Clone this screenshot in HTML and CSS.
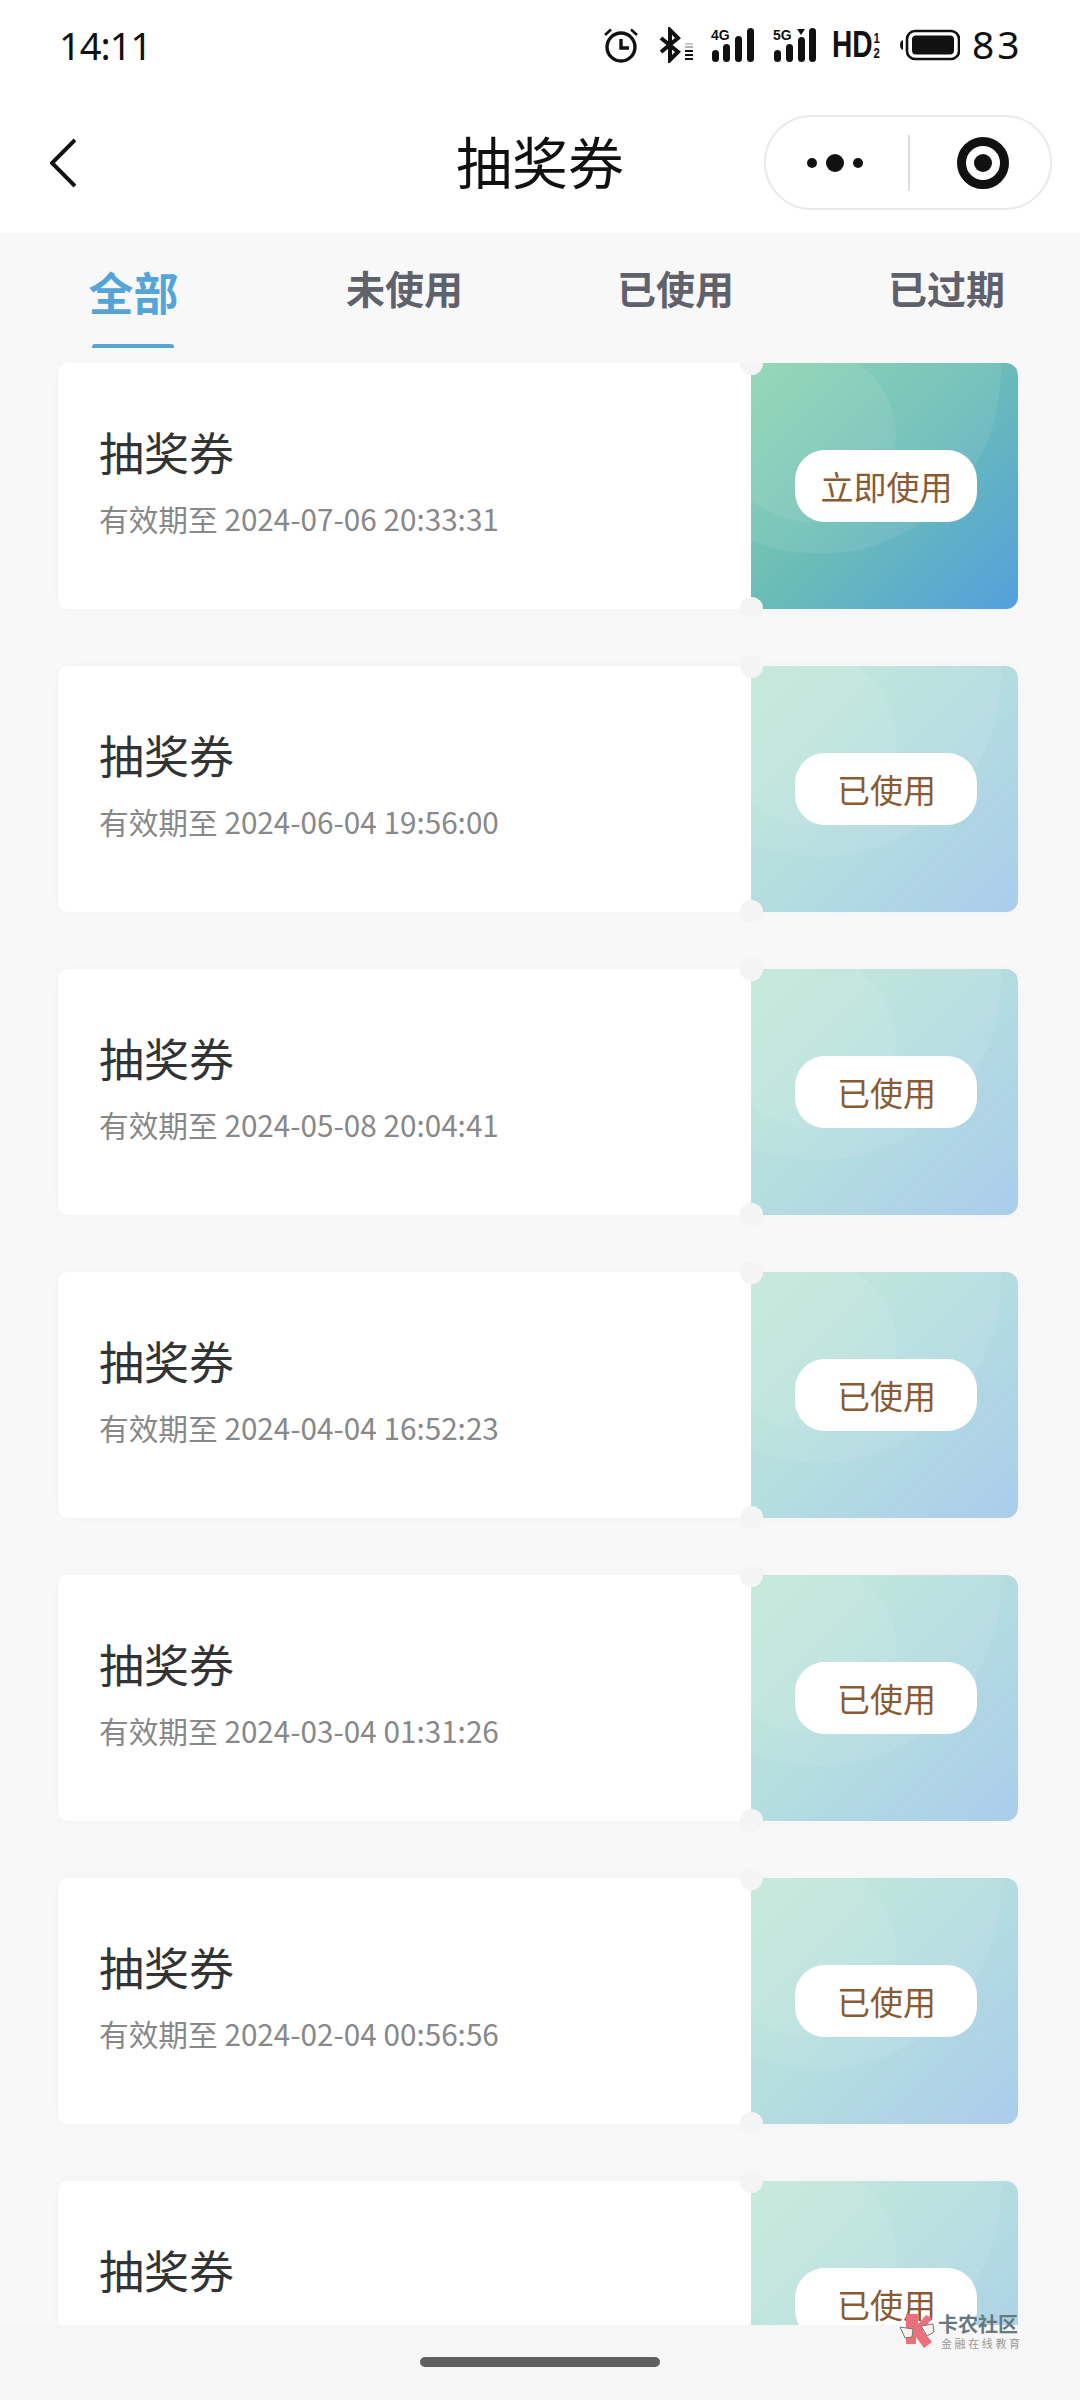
FILE: index.html
```html
<!DOCTYPE html>
<html lang="zh-CN">
<head>
<meta charset="utf-8">
<title>抽奖券</title>
<link rel="stylesheet" href="styles.css">
</head>
<body>
<div class="app">
  <header class="top">
    <div class="status">
      <span class="time">14:11</span>
      <div class="status-icons">
        <svg class="ic-alarm" width="36" height="36" viewBox="0 0 36 36"><circle cx="18" cy="20" r="14" fill="none" stroke="#111" stroke-width="3.4"/><path d="M18 12v9h8" fill="none" stroke="#111" stroke-width="3.4"/><path d="M2 8 8 2.500M34 8 28 2.500" stroke="#111" stroke-width="2.500"/></svg>
        <svg class="ic-bt" width="36" height="36" viewBox="0 0 36 36"><path d="M3 11 20 25 12 33V3l8 8L3 25" fill="none" stroke="#111" stroke-width="4"/><path d="M27 17h8" stroke="#bbb" stroke-width="1.500"/><path d="M27 20h8" stroke="#999" stroke-width="1.500"/><path d="M27 24h8M27 28h8M27 32h8" stroke="#111" stroke-width="2"/></svg>
        <svg class="ic-sig ic-4g" width="44" height="36" viewBox="0 0 44 36"><text x="0" y="13" class="mini">4G</text><rect x="1" y="23" width="7" height="12" rx="3.500"/><rect x="12" y="17" width="7" height="18" rx="3.500"/><rect x="24" y="9" width="7" height="26" rx="3.500"/><rect x="36" y="1" width="7" height="34" rx="3.500"/></svg>
        <svg class="ic-sig" width="44" height="36" viewBox="0 0 44 36"><text x="0" y="13" class="mini">5G</text><path d="M24 2h8l-4 6z"/><rect x="1" y="23" width="7" height="12" rx="3.500"/><rect x="13" y="17" width="7" height="18" rx="3.500"/><rect x="25" y="10" width="7" height="25" rx="3.500"/><rect x="36" y="1" width="7" height="34" rx="3.500"/></svg>
        <span class="hd">HD<span class="hd-frac"><i>1</i><i>2</i></span></span>
        <svg class="ic-bat" width="60" height="32" viewBox="0 0 60 32"><path d="M0 16q0-4 3-5v10q-3-1-3-5z" fill="#111"/><rect x="7" y="2" width="52" height="28" rx="8" fill="none" stroke="#111" stroke-width="2.600"/><rect x="12" y="6.500" width="42" height="19" rx="4" fill="#111"/></svg>
        <span class="level">83</span>
      </div>
    </div>
    <nav class="navbar">
      <svg class="back" width="26" height="50" viewBox="0 0 26 50"><path d="M25 2 2 25l23 23" fill="none" stroke="#111" stroke-width="4"/></svg>
      <h1 class="title">抽奖券</h1>
      <div class="capsule">
        <div class="more"><i class="dot"></i><i class="dot dot-big"></i><i class="dot"></i></div>
        <span class="cap-line"></span>
        <div class="target"><i class="target-in"></i></div>
      </div>
    </nav>
  </header>

  <div class="tabs">
    <div class="tab tab-on">全部</div>
    <div class="tab">未使用</div>
    <div class="tab">已使用</div>
    <div class="tab">已过期</div>
  </div>

  <main class="list">
    <article class="coupon">
      <div class="info"><div class="name">抽奖券</div><div class="date">有效期至 2024-07-06 20:33:31</div></div>
      <div class="side side-live"><button class="btn">立即使用</button></div>
    </article>
    <article class="coupon">
      <div class="info"><div class="name">抽奖券</div><div class="date">有效期至 2024-06-04 19:56:00</div></div>
      <div class="side side-used"><button class="btn">已使用</button></div>
    </article>
    <article class="coupon">
      <div class="info"><div class="name">抽奖券</div><div class="date">有效期至 2024-05-08 20:04:41</div></div>
      <div class="side side-used"><button class="btn">已使用</button></div>
    </article>
    <article class="coupon">
      <div class="info"><div class="name">抽奖券</div><div class="date">有效期至 2024-04-04 16:52:23</div></div>
      <div class="side side-used"><button class="btn">已使用</button></div>
    </article>
    <article class="coupon">
      <div class="info"><div class="name">抽奖券</div><div class="date">有效期至 2024-03-04 01:31:26</div></div>
      <div class="side side-used"><button class="btn">已使用</button></div>
    </article>
    <article class="coupon">
      <div class="info"><div class="name">抽奖券</div><div class="date">有效期至 2024-02-04 00:56:56</div></div>
      <div class="side side-used"><button class="btn">已使用</button></div>
    </article>
    <article class="coupon">
      <div class="info"><div class="name">抽奖券</div></div>
      <div class="side side-used"><button class="btn">已使用</button></div>
    </article>
  </main>

  <footer class="bottom"><span class="home"></span></footer>

  <div class="mark">
    <svg class="mark-logo" width="36" height="36" viewBox="0 0 36 36"><path d="M7 2h12v10l8-9 6 3-9 13 9 11-8 6-8-11v7H7z" fill="#ec6f7c"/><path d="M1 15l13 2-1 8-7 1zM22 14l12-2 1 8-7 4z" fill="#f7f1ee" stroke="#777" stroke-width="1"/></svg>
    <div class="mark-text"><div class="mark-big">卡农社区</div><div class="mark-small">金融在线教育</div></div>
  </div>
</div>
</body>
</html>
```
FILE: styles.css
```css
* { box-sizing: border-box; margin: 0; padding: 0; }
html, body { width: 1080px; height: 2400px; overflow: hidden; }
body { background: #f8f8f8; font-family: "Noto Sans CJK SC", "Noto Sans", sans-serif; }
.app { position: relative; width: 1080px; height: 2400px; display: flex; flex-direction: column; }

.top { height: 233px; background: #fff; flex: none; }
.status { height: 92px; padding: 23px 0 0 59px; display: flex; align-items: flex-start; }
.time { font: 400 38px/44px "Noto Sans", sans-serif; color: #111; letter-spacing: -1px; width: 96px; }
.status-icons { margin-left: 448px; display: flex; align-items: center; height: 44px; color: #111; }
.ic-alarm { margin-right: 19px; }
.ic-bt { margin-right: 17px; }
.ic-sig { margin-right: 15px; fill: #111; }
.ic-4g { margin-right: 18px; }
.mini { font: 700 14px "Liberation Sans", sans-serif; fill: #111; }
.hd { display: flex; align-items: center; font: 700 37px/36px "Liberation Sans", sans-serif; width: 48px; margin-right: 20px; transform: scaleX(.76); transform-origin: left center; white-space: nowrap; }
.hd-frac { display: flex; flex-direction: column; margin-left: 1px; }
.hd-frac i { font: 700 15px/15px "Liberation Sans", sans-serif; }
.ic-bat { margin-right: 12px; }
.level { font: 400 39px/42px "Noto Sans", sans-serif; letter-spacing: 3px; padding-bottom: 2px; }

.navbar { position: relative; height: 141px; display: flex; align-items: center; justify-content: space-between; padding: 0 28px 0 50px; }
.back { flex: none; }
.title { position: absolute; left: 0; right: 0; text-align: center; font-size: 56px; font-weight: 400; line-height: 80px; padding-bottom: 6px; color: #111; }
.capsule { position: relative; width: 288px; height: 95px; border: 2px solid #e9e9e9; border-radius: 48px; display: flex; align-items: center; background: #fff; }
.more { width: 142px; padding-right: 4px; display: flex; align-items: center; justify-content: center; gap: 9px; }
.dot { width: 10px; height: 10px; border-radius: 50%; background: #111; }
.dot-big { width: 18px; height: 18px; }
.cap-line { width: 2px; height: 56px; background: #ddd; }
.target { margin-left: 47px; width: 52px; height: 52px; border: 9px solid #111; border-radius: 50%; display: flex; align-items: center; justify-content: center; }
.target-in { width: 18px; height: 18px; border-radius: 50%; background: #111; }

.tabs { height: 130px; flex: none; display: grid; grid-template-columns: repeat(4, 271px); align-items: start; justify-items: center; margin-left: -2px; }
.tab { font-size: 39px; font-weight: 700; line-height: 56px; padding-top: 26px; color: #5f626c; }
.tab-on { position: relative; font-size: 45px; line-height: 64px; padding-top: 27px; color: #55a4d8; height: 115px; }
.tab-on::after { content: ""; position: absolute; left: 4px; width: 82px; height: 4px; bottom: 0; background: #55a4d8; border-radius: 3px 3px 0 0; }

.list { flex: 1; overflow: hidden; display: flex; flex-direction: column; gap: 57px; padding: 0 62px 0 58px; }
.coupon { position: relative; flex: none; height: 246px; display: flex; border-radius: 10px; box-shadow: 0 0 12px rgba(0,0,0,.025); }
.coupon::before, .coupon::after { content: ""; position: absolute; left: 682px; width: 23px; height: 23px; border-radius: 50%; background: #f5f4f4; z-index: 2; }
.coupon::before { top: -11px; }
.coupon::after { bottom: -11px; }
.info { flex: 1; background: #fff; border-radius: 10px 0 0 10px; padding: 57px 0 0 41px; }
.name { font-size: 45px; line-height: 64px; color: #333; }
.date { font-size: 29.700px; line-height: 44px; margin-top: 13px; color: #888; white-space: nowrap; }
.side { position: relative; overflow: hidden; width: 267px; flex: none; border-radius: 0 12px 12px 0; display: flex; align-items: center; justify-content: center; padding-left: 2px; }
.side::before { content: ""; position: absolute; left: -114px; top: -173px; width: 364px; height: 364px; border-radius: 50%; background: rgba(255,255,255,.08); }
.side::after { content: ""; position: absolute; left: -28px; top: -14px; width: 173px; height: 173px; border-radius: 50%; background: rgba(255,255,255,.08); }
.side-live { background: linear-gradient(135deg, #84d2ab 0%, #6bbcb8 50%, #53a0dd 100%); }
.side-used { background: linear-gradient(135deg, #bee8d5 0%, #b4dde0 50%, #aacdec 100%); }
.btn { position: relative; z-index: 1; width: 182px; height: 72px; border: 0; border-radius: 30px; background: #fff; color: #8a5a33; font: 400 33px/72px "Noto Sans CJK SC", sans-serif; padding-left: 2px; }

.bottom { height: 75px; flex: none; background: #f6f6f6; display: flex; justify-content: center; padding-top: 32px; position: relative; z-index: 3; }
.home { width: 240px; height: 10px; border-radius: 5px; background: #606060; }

.mark { position: absolute; z-index: 4; left: 899px; top: 2312px; display: flex; gap: 3px; }
.mark-text { width: 84px; }
.mark-big { font-size: 20px; line-height: 24px; font-weight: 700; color: #66797f; white-space: nowrap; }
.mark-small { font-size: 11px; line-height: 14px; letter-spacing: 2.600px; color: #9a9a9a; white-space: nowrap; margin-left: 3px; }
```
